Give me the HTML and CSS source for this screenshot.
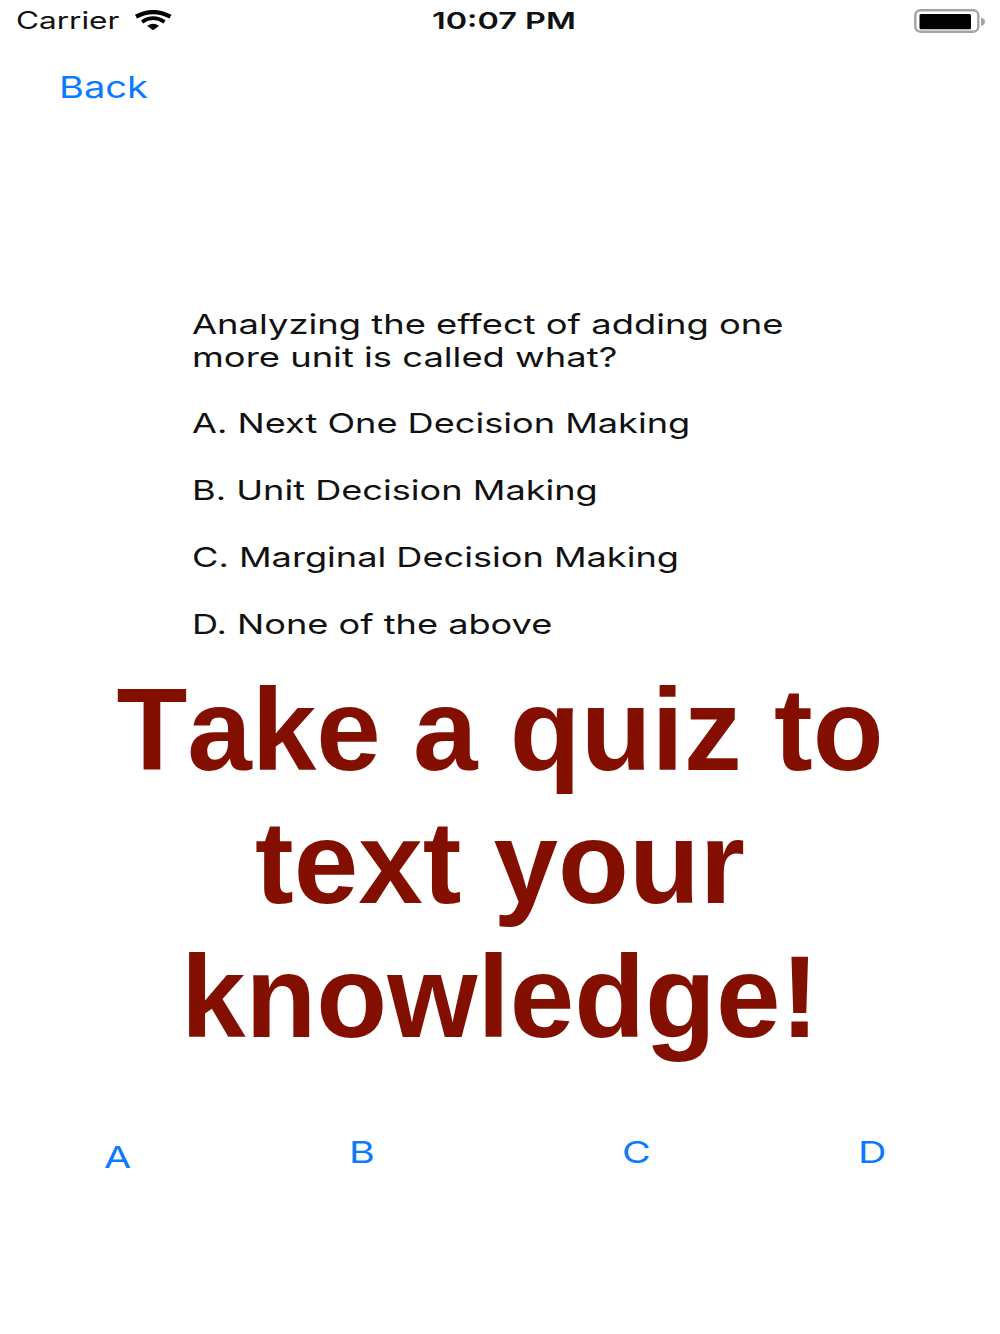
FILE: index.html
```html
<!DOCTYPE html>
<html lang="en">
<head>
    <meta charset="UTF-8">
    <meta name="viewport" content="width=device-width, initial-scale=1.0">
    <title>Quiz</title>
    <link rel="stylesheet" href="styles.css">
</head>
<body>
    <div class="screen">
        <header class="status-bar">
            <div class="carrier">
                <span class="wide carrier-name">Carrier</span>
                <svg class="wifi" width="38" height="21" viewBox="0 0 38 21" fill="none" stroke="#000">
                    <path d="M2 6.7 Q19 -2.6 36.5 6.7" stroke-width="4.2"/>
                    <path d="M8 11.9 Q19 4.4 30.5 11.9" stroke-width="3.8"/>
                    <path d="M13.2 16 Q19 11.4 25 16 L19 20.3 Z" fill="#000" stroke="none"/>
                </svg>
            </div>
            <span class="wide time">10:07 PM</span>
            <svg class="battery" width="72" height="24" viewBox="0 0 72 24">
                <rect x="1.3" y="1.3" width="63" height="21.4" rx="5" fill="#fff" stroke="#a3a3a3" stroke-width="2.4"/>
                <rect x="5.5" y="5" width="51.5" height="15.3" rx="1.5" fill="#000"/>
                <path d="M67 8.5 Q71 9.5 71 12.6 Q71 16 67 17 Z" fill="#a3a3a3"/>
            </svg>
        </header>

        <nav class="nav-bar">
            <button class="wide link back">Back</button>
        </nav>

        <main class="question">
            <p class="wide line-1">Analyzing the effect of adding one</p>
            <p class="wide line-2">more unit is called what?</p>
            <p class="wide option option-a">A. Next One Decision Making</p>
            <p class="wide option option-b">B. Unit Decision Making</p>
            <p class="wide option option-c">C. Marginal Decision Making</p>
            <p class="wide option option-d">D. None of the above</p>
        </main>

        <h1>Take a quiz to<br>text your<br>knowledge!</h1>

        <div class="answers">
            <button class="wide link answer-a">A</button>
            <button class="wide link">B</button>
            <button class="wide link">C</button>
            <button class="wide link">D</button>
        </div>
    </div>
</body>
</html>
```
FILE: styles.css
```css
* {
    margin: 0;
    padding: 0;
    box-sizing: border-box;
}

body {
    font-family: Inter, 'Liberation Sans', sans-serif;
    background: #fff;
    color: #111;
}

.screen {
    width: 1000px;
    height: 1334px;
    display: flex;
    flex-direction: column;
    overflow: hidden;
}

/* wide lettering */
.wide {
    width: max-content;
    transform: scaleX(1.314);
    transform-origin: left center;
    white-space: nowrap;
}

.status-bar {
    height: 41px;
    padding: 0 14px 0 16px;
    display: grid;
    grid-template-columns: 416px 1fr auto;
    align-items: center;
    font-size: 24px;
}

.carrier {
    display: flex;
    align-items: center;
}

.carrier-name {
    width: 118px;
}

.time {
    font-weight: 600;
    font-size: 23.5px;
    transform: scaleX(1.38);
}

.link {
    border: none;
    background: none;
    color: #0a7aff;
    font-family: inherit;
    font-size: 30px;
    line-height: 36px;
    cursor: pointer;
}

.nav-bar {
    height: 267px;
    padding: 28px 0 0 59px;
}

.back {
    transform: scaleX(1.27);
}

.question {
    height: 366px;
    padding-left: 192px;
    font-size: 27.5px;
    line-height: 33.4px;
}

.line-1, .line-2 {
    transform: scaleX(1.322);
}

.option {
    margin-top: 33.4px;
}

.option-a {
    margin-top: 32.6px;
}

h1 {
    height: 400px;
    margin-top: -10px;
    font-family: 'Liberation Sans', Arial, sans-serif;
    font-size: 116px;
    line-height: 133.3px;
    font-weight: bold;
    font-kerning: none;
    text-align: center;
    color: #820f00;
}

.answers {
    padding: 70px 0 0 104px;
    display: grid;
    grid-template-columns: 245px 273px 236px 1fr;
    align-items: start;
}

.answer-a {
    margin-top: 5px;
}
```
